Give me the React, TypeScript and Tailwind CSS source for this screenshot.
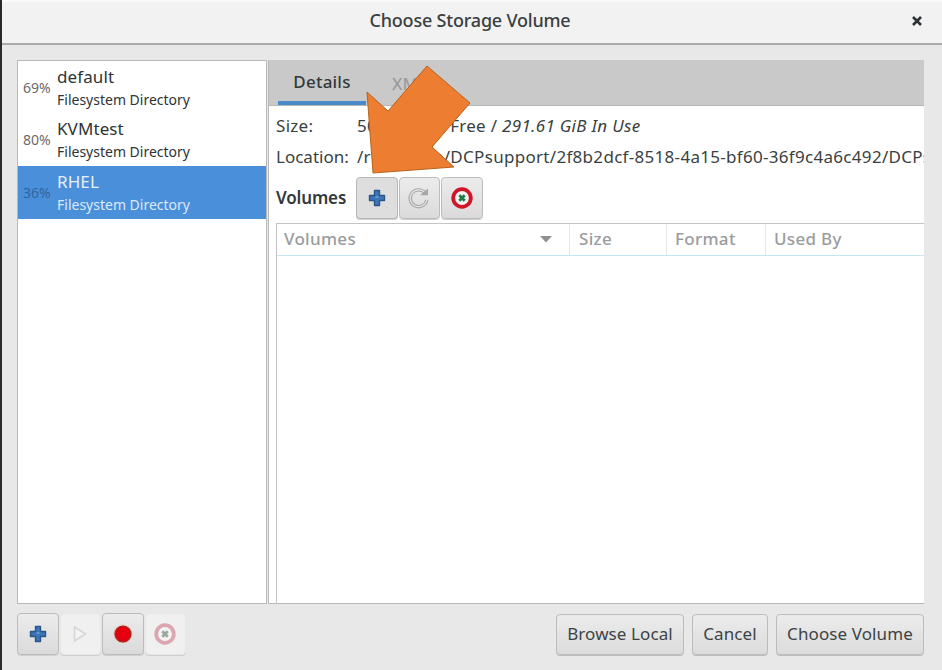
const font = { fontFamily: '"Noto Sans", sans-serif' };

function Plus() {
  return (
    <svg width="18" height="18" viewBox="0 0 18 18">
      <path d="M6.5 1.5h5v5h5v5h-5v5h-5v-5h-5v-5h5z" fill="#3a76b8" stroke="#2a5688" strokeWidth="1.4" strokeLinejoin="round" />
      <path d="M7.5 8h3" stroke="#8fb8e2" strokeWidth="1" />
    </svg>
  );
}

function Refresh() {
  return (
    <svg width="24" height="24" viewBox="0 0 24 24" fill="none">
      <path d="M18.5 7.5A8.4 8.4 0 1 0 19.8 14" stroke="#a6a6a6" strokeWidth="3.4" />
      <path d="M18.5 7.5A8.4 8.4 0 1 0 19.8 14" stroke="#e4e4e4" strokeWidth="1.2" />
      <path d="M13 9.2h8V2.4z" fill="#a6a6a6" />
    </svg>
  );
}

function StopIcon({ faded }: { faded?: boolean }) {
  const ring = faded ? "#dba6b0" : "#cf1528";
  const x = faded ? "#9aa59e" : "#1f7a43";
  return (
    <svg width="24" height="24" viewBox="0 0 24 24" fill="none">
      <circle cx="12" cy="12" r="8.8" fill="#f3f3f3" stroke={ring} strokeWidth="3.8" />
      <path d="M9.3 9.3l5.4 5.4M14.7 9.3l-5.4 5.4" stroke={x} strokeWidth="2.8" />
    </svg>
  );
}

function Record() {
  return (
    <svg width="22" height="22" viewBox="0 0 22 22">
      <circle cx="11" cy="11" r="9.6" fill="#e9c8c0" />
      <circle cx="11" cy="11" r="8" fill="#e5000f" stroke="#9c2a1e" strokeWidth="1.2" />
    </svg>
  );
}

function Play() {
  return (
    <svg width="16" height="18" viewBox="0 0 16 18" fill="none">
      <path d="M2.5 2l11 7-11 7z" fill="#f4f4f4" stroke="#d6d6d6" strokeWidth="1.6" />
    </svg>
  );
}

function Row({ pct, name, selected }: { pct: string; name: string; selected?: boolean }) {
  return (
    <div className={`flex items-center h-[52.5px] pl-[5px] ${selected ? "bg-[#4a8fda]" : "bg-white"}`}>
      <span className={`w-[34px] shrink-0 text-[14px] ${selected ? "text-[#2f659f]" : "text-[#6a6a6a]"}`}>{pct}</span>
      <div className="flex flex-col">
        <span className={`text-[17px] leading-[24px] tracking-[0.1px] ${selected ? "text-[#e4effa]" : "text-[#2e3436]"}`}>{name}</span>
        <span className={`text-[14px] leading-[21px] ${selected ? "text-[#dce9f8]" : "text-[#2e3436]"}`}>Filesystem Directory</span>
      </div>
    </div>
  );
}

function IconButton({ children, kind = "normal" }: { children: React.ReactNode; kind?: "normal" | "disabled" | "hover" }) {
  const styles =
    kind === "disabled"
      ? "bg-[#f1f0f0] border-[#e6e6e6]"
      : kind === "hover"
        ? "bg-[#dedede] border-[#b8b8b8]"
        : "bg-gradient-to-b from-[#ececec] to-[#dadada] border-[#bcbcbc]";
  return (
    <div className={`flex items-center justify-center w-[41.5px] h-[42px] rounded-[4px] border shadow-[0_1px_0_#cfcfcf] ${styles}`}>
      {children}
    </div>
  );
}

function TextButton({ label, className }: { label: string; className: string }) {
  return (
    <div className={`flex items-center justify-center h-[41px] pb-[1px] rounded-[4px] border border-[#bcbcbc] bg-gradient-to-b from-[#ececec] to-[#dcdcdc] shadow-[0_1px_0_#bdbdbd] text-[17px] tracking-[0.1px] text-[#3d4345] ${className}`}>
      {label}
    </div>
  );
}

function Th({ label, className }: { label: string; className: string }) {
  return (
    <div className={`flex items-center h-full pb-[2px] border-r border-[#e6e6e6] text-[17px] tracking-[0.3px] font-medium text-[#9a9c9d] ${className}`}>
      {label}
    </div>
  );
}

export default function App() {
  return (
    <div className="relative w-[942px] h-[670px] overflow-hidden bg-[#e8e8e8] text-[#2e3436] flex flex-col border-l-2 border-l-[#2a2a2a]" style={font}>
      <div className="h-[45px] shrink-0 flex items-center justify-center relative bg-[#f2f2f2] border-t-2 border-t-[#fafafa] border-b-2 border-[#a9a9a9] pb-[5px]">
        <span className="text-[18px] font-medium text-[#3a3f41] tracking-[-0.2px] -ml-[4px]">Choose Storage Volume</span>
        <span className="absolute right-[19px] top-[13px]">
          <svg width="12" height="12" viewBox="0 0 12 12"><path d="M2 2l8 8M10 2l-8 8" stroke="#2e3436" strokeWidth="2.6" /></svg>
        </span>
      </div>

      <div className="flex-1 min-h-0 flex flex-col pl-[15px] pr-[18px] pt-[15px] pb-[15px]">
        <div className="flex-1 min-h-0 flex gap-px">
          <div className="w-[250px] shrink-0 bg-white border border-[#b9b9b9] flex flex-col">
            <Row pct="69%" name="default" />
            <Row pct="80%" name="KVMtest" />
            <Row pct="36%" name="RHEL" selected />
          </div>

          <div className="flex-1 min-w-0 flex flex-col bg-white border-b border-l border-[#b9b9b9]">
            <div className="h-[46px] shrink-0 bg-[#c9c9c9] flex items-stretch pl-[9px] border-b border-[#b5b5b5]">
              <div className="flex items-center justify-center w-[88px] border-b-[4px] border-[#4a8ac9] text-[17px] tracking-[0.2px] font-medium text-[#33393b] pt-[3px]">Details</div>
              <div className="flex items-center pl-[26px] text-[17px] font-medium text-[#9b9b9b] pt-[3px]">XML</div>
            </div>

            <div className="flex items-center h-[38px] pl-[7px] text-[17px] leading-none whitespace-nowrap tracking-[0.3px]">
              <span className="w-[81px] shrink-0 text-[#3a3f41]">Size:</span>
              <span className="text-[#3a3f41]">508.39 GiB Free / <i>291.61 GiB In Use</i></span>
            </div>
            <div className="flex items-center h-[24px] pl-[7px] text-[17px] leading-none whitespace-nowrap overflow-hidden tracking-[0.3px]">
              <span className="w-[81px] shrink-0 text-[#3a3f41] tracking-[0px]">Location:</span>
              <span className="text-[#3a3f41]">/rhev/data/DCPsupport/2f8b2dcf-8518-4a15-bf60-36f9c4a6c492/DCPsupport</span>
            </div>

            <div className="flex items-center h-[42px] mt-[9px] pl-[7px]">
              <span className="w-[80px] shrink-0 text-[17px] font-semibold text-[#33393b] tracking-[-0.15px]">Volumes</span>
              <div className="flex gap-px">
                <IconButton kind="hover"><Plus /></IconButton>
                <IconButton><Refresh /></IconButton>
                <IconButton><StopIcon /></IconButton>
              </div>
            </div>

            <div className="flex-1 min-h-0 ml-[7px] mt-[4px] border-l border-[#c4c4c4] flex flex-col">
              <div className="h-[33px] shrink-0 flex items-stretch border-t border-[#c4c4c4] border-b border-b-[#c6e6f2]">
                <div className="flex items-center justify-between w-[293px] h-full pb-[2px] border-r border-[#e6e6e6] pl-[7px] pr-[16px] text-[17px] tracking-[0.3px] font-medium text-[#9a9c9d]">
                  <span>Volumes</span>
                  <svg width="14" height="8" viewBox="0 0 14 8"><path d="M1 1h12L7 7.5z" fill="#8f8f8f" /></svg>
                </div>
                <Th label="Size" className="w-[97px] pl-[9px]" />
                <Th label="Format" className="w-[99px] pl-[8px]" />
                <div className="flex items-center h-full pb-[2px] text-[17px] tracking-[0.3px] font-medium text-[#9a9c9d] pl-[8px]">Used By</div>
              </div>
              <div className="flex-1 bg-white" />
            </div>
          </div>
        </div>

        <div className="h-[42px] shrink-0 mt-[9px] flex items-center justify-between">
          <div className="flex gap-px">
            <IconButton><Plus /></IconButton>
            <IconButton kind="disabled"><Play /></IconButton>
            <IconButton><Record /></IconButton>
            <IconButton kind="disabled"><StopIcon faded /></IconButton>
          </div>
          <div className="flex gap-[8px]">
            <TextButton label="Browse Local" className="w-[128px]" />
            <TextButton label="Cancel" className="w-[76px]" />
            <TextButton label="Choose Volume" className="w-[148px]" />
          </div>
        </div>
      </div>

      <div className="absolute -left-[2px] top-[567px] w-[2px] h-[103px] bg-[#c9c9c9]" />

      <svg className="absolute left-[-2px] top-0 pointer-events-none" width="942" height="670" viewBox="0 0 942 670">
        <path d="M367 92L388 111L427 66L470 103L432 147L454 167L373 173Z" fill="#ed7d31" stroke="#b5651d" strokeWidth="1" />
      </svg>
    </div>
  );
}
